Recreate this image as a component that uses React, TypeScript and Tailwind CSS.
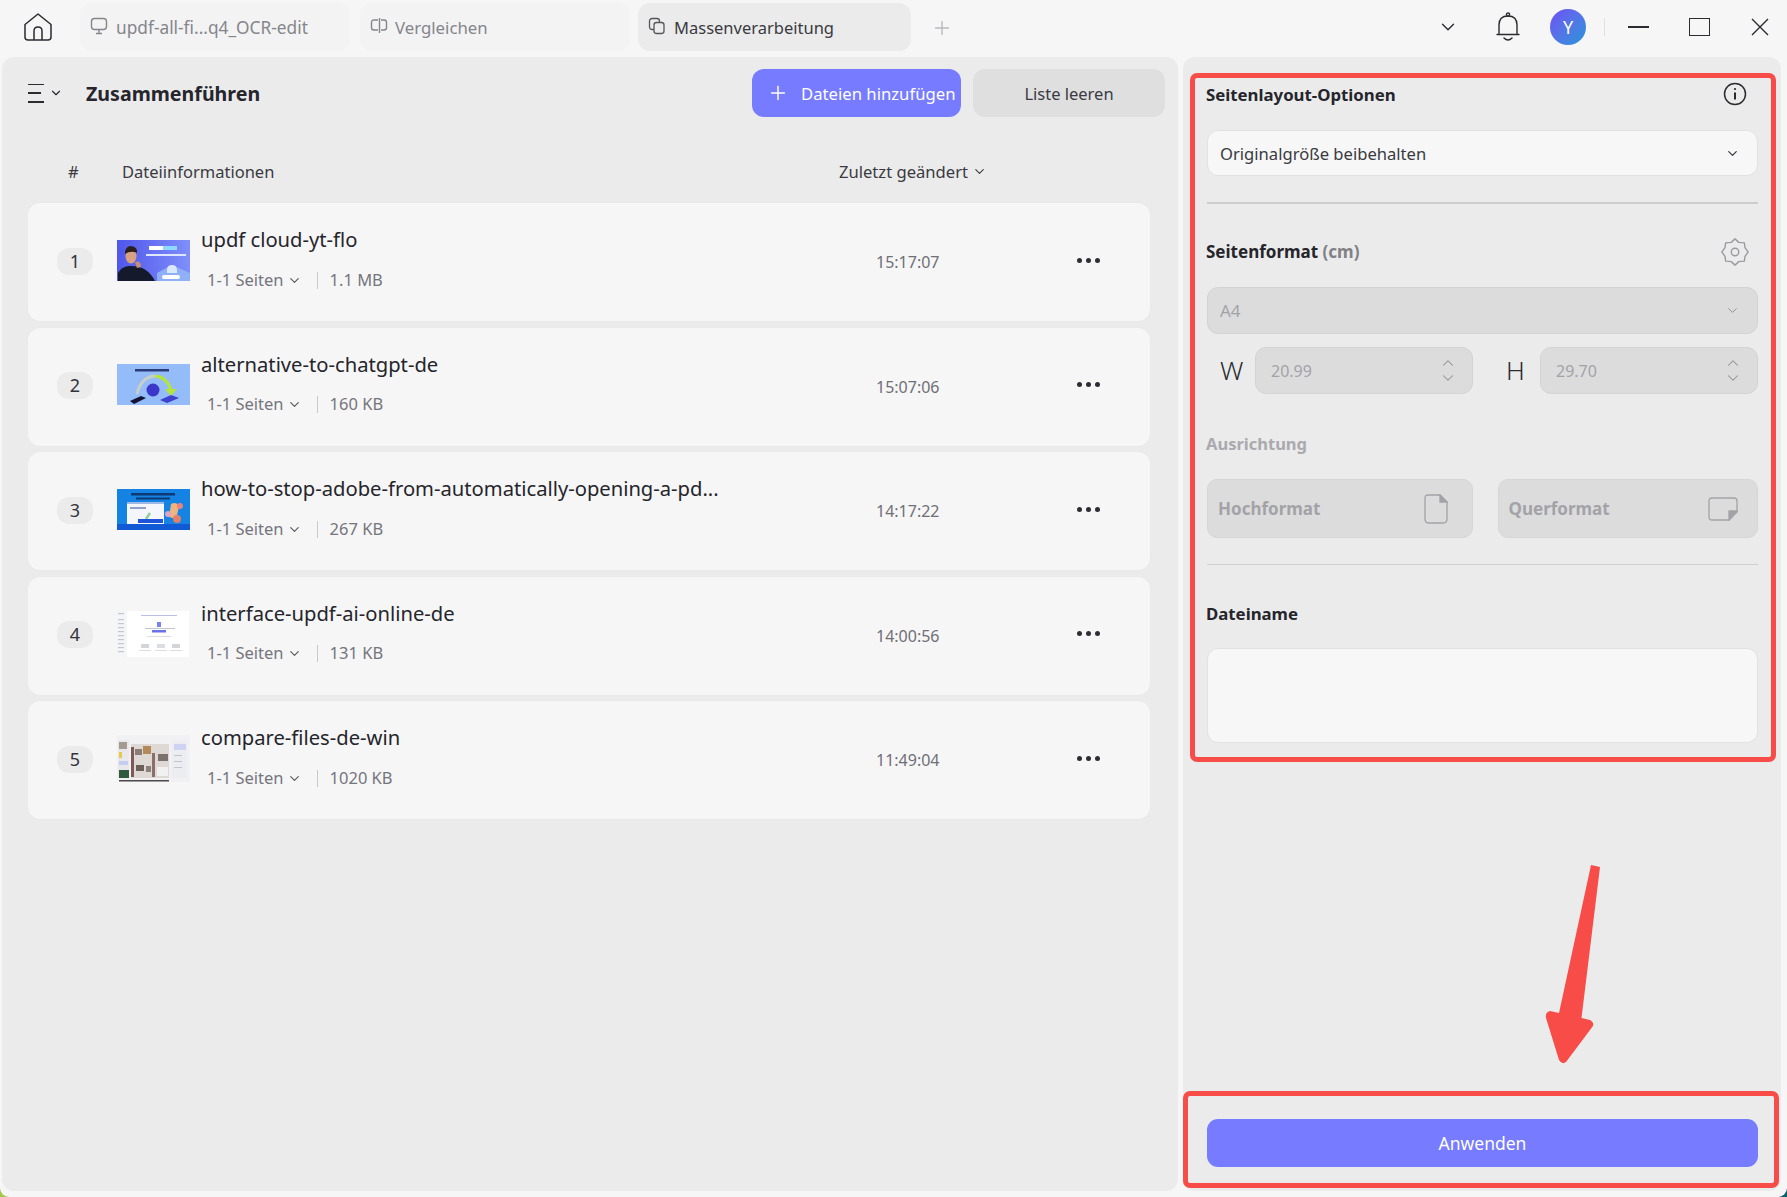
import type { ReactNode } from "react";
import { ChevronDown, ChevronUp, Plus } from "lucide-react";

type FileRow = {
  id: number;
  title: string;
  size: string;
  time: string;
  thumb: "cloud" | "chatgpt" | "adobe" | "online" | "compare";
};

const files: FileRow[] = [
  { id: 1, title: "updf cloud-yt-flo", size: "1.1 MB", time: "15:17:07", thumb: "cloud" },
  { id: 2, title: "alternative-to-chatgpt-de", size: "160 KB", time: "15:07:06", thumb: "chatgpt" },
  { id: 3, title: "how-to-stop-adobe-from-automatically-opening-a-pd...", size: "267 KB", time: "14:17:22", thumb: "adobe" },
  { id: 4, title: "interface-updf-ai-online-de", size: "131 KB", time: "14:00:56", thumb: "online" },
  { id: 5, title: "compare-files-de-win", size: "1020 KB", time: "11:49:04", thumb: "compare" },
];

function Thumb({ kind }: { kind: FileRow["thumb"] }) {
  if (kind === "cloud") {
    return (
      <svg viewBox="0 0 73 41" className="h-[41px] w-[73px] shrink-0">
        <defs>
          <linearGradient id="cloudBg" x1="0" x2="1" y1="0" y2="0">
            <stop offset="0" stopColor="#4f56ea" />
            <stop offset="1" stopColor="#7f8ffa" />
          </linearGradient>
        </defs>
        <rect width="73" height="41" fill="url(#cloudBg)" />
        <path d="M40 33 L55 25 L73 33 V41 H40 Z" fill="#8fb0f8" />
        <path d="M50 30 Q50 25 55 25 Q60 25 60 30 V33 H50 Z" fill="#dbe8ff" />
        <rect x="45" y="35" width="18" height="4" rx="2" fill="#ffffff" />
        <rect x="32" y="6" width="14" height="4" fill="#ffffff" />
        <rect x="46" y="6" width="14" height="4" fill="#8fd8ff" />
        <rect x="29" y="14" width="40" height="2" fill="#dfe6ff" />
        <path d="M1 41 V33 Q4 27 12 26 Q30 25 38 41 Z" fill="#141a2c" />
        <ellipse cx="14" cy="16" rx="5.5" ry="7.5" fill="#d9a184" />
        <path d="M8 14 Q8 6 14 6 Q21 7 20 13 Q14 10 8 14 Z" fill="#2a211c" />
        <path d="M18 22 Q24 20 24 27 L20 28 Z" fill="#c98f74" />
      </svg>
    );
  }
  if (kind === "chatgpt") {
    return (
      <svg viewBox="0 0 73 41" className="h-[41px] w-[73px] shrink-0">
        <rect width="73" height="41" fill="#94bcf9" />
        <rect x="18" y="5" width="34" height="2.5" fill="#2a3b78" />
        <path d="M20 30 Q24 13 38 12" fill="none" stroke="#c6cfc8" strokeWidth="3" />
        <path d="M38 12 Q50 13 54 26" fill="none" stroke="#b5e43c" strokeWidth="3" />
        <path d="M48 25 L60 25 L54 32 Z" fill="#b5e43c" />
        <circle cx="36" cy="26" r="6.5" fill="#3b37c9" />
        <path d="M13 37 L24 32 L29 34 L17 40 Z" fill="#141433" />
        <path d="M43 36 L54 31 L62 34 L50 39 Z" fill="#3f3fd0" />
      </svg>
    );
  }
  if (kind === "adobe") {
    return (
      <svg viewBox="0 0 73 41" className="h-[41px] w-[73px] shrink-0">
        <rect width="73" height="41" fill="#1583e3" />
        <rect y="35" width="73" height="6" fill="#1259d6" />
        <rect x="14" y="4" width="44" height="2.5" fill="#0c3a74" />
        <rect x="19" y="8.5" width="34" height="2" fill="#0c3a74" />
        <rect x="10" y="13" width="37" height="22" fill="#f4f6fb" />
        <rect x="10" y="13" width="37" height="2" fill="#9bb8e6" />
        <rect x="13" y="18" width="16" height="2" fill="#8ea2c8" />
        <path d="M29 30 L33 24" stroke="#93cd9e" strokeWidth="2.5" />
        <rect x="21" y="30" width="25" height="4" fill="#1e55d8" />
        <path d="M54 15 Q60 12 62 18 L59 30 L52 28 Z" fill="#f0b27e" />
        <circle cx="60" cy="30" r="4" fill="#e07f6a" />
        <circle cx="51" cy="25" r="3" fill="#d9a6c5" />
        <circle cx="63" cy="17" r="3" fill="#e8847a" />
      </svg>
    );
  }
  if (kind === "online") {
    return (
      <svg viewBox="0 0 73 46" className="h-[46px] w-[73px] shrink-0">
        <rect x="10" width="62" height="46" fill="#ffffff" />
        <rect width="9" height="46" fill="#f4f5f8" />
        {[2, 8, 12, 16, 20, 24, 28, 32, 36, 40].map((y) => (
          <rect key={y} x="1" y={y} width="6" height="1.2" fill="#c5c7d0" />
        ))}
        <rect x="24" y="4" width="36" height="1" fill="#b9c1ea" />
        <rect x="40" y="11" width="4" height="5" fill="#7a83e8" />
        <rect x="28" y="17" width="30" height="1" fill="#c4c6ce" />
        <rect x="35" y="19" width="14" height="2.5" fill="#6a72ea" />
        <rect x="30" y="25" width="24" height="1" fill="#dcdde2" />
        <rect x="24" y="33" width="8" height="4" fill="#d4d5da" />
        <rect x="40" y="33" width="8" height="4" fill="#dddee3" />
        <rect x="55" y="33" width="8" height="4" fill="#d4d5da" />
        <rect x="22" y="39" width="12" height="1" fill="#dcdde2" />
        <rect x="38" y="39" width="12" height="1" fill="#dcdde2" />
        <rect x="53" y="39" width="12" height="1" fill="#dcdde2" />
      </svg>
    );
  }
  return (
    <svg viewBox="0 0 73 47" className="h-[47px] w-[73px] shrink-0">
      <rect width="73" height="47" fill="#f1f1f4" />
      <rect x="1" y="5" width="11" height="38" fill="#e8e8ea" />
      <rect x="2" y="7" width="8" height="7" fill="#a59a92" />
      <rect x="2" y="17" width="3" height="6" fill="#e8c84a" />
      <rect x="2" y="26" width="9" height="4" fill="#c7cdf0" />
      <rect x="2" y="35" width="10" height="8" fill="#2f5a3e" />
      <rect x="2" y="45" width="50" height="1.5" fill="#4a4a4a" />
      <rect x="14" y="9" width="38" height="34" fill="#dfd9d5" />
      <rect x="14" y="12" width="3" height="30" fill="#7d5a58" />
      <rect x="18" y="14" width="7" height="6" fill="#8a7d76" />
      <rect x="26" y="11" width="8" height="8" fill="#b48a5a" />
      <rect x="35" y="18" width="3" height="24" fill="#8c6e6a" />
      <rect x="41" y="19" width="10" height="7" fill="#7d726b" />
      <rect x="19" y="30" width="8" height="6" fill="#6b5f59" />
      <rect x="29" y="31" width="5" height="6" fill="#8d8079" />
      <rect x="40" y="32" width="11" height="9" fill="#f2f1f1" />
      <rect x="55" y="6" width="15" height="37" fill="#ecedf1" />
      <rect x="57" y="9" width="12" height="6" fill="#cfd3f3" />
      <rect x="57" y="20" width="8" height="1" fill="#c3c3c9" />
      <rect x="57" y="26" width="8" height="1" fill="#c3c3c9" />
      <rect x="57" y="32" width="8" height="1" fill="#c3c3c9" />
    </svg>
  );
}

function FileCard({ file }: { file: FileRow }) {
  return (
    <div className="flex h-[118px] items-center rounded-xl bg-[#f6f6f7] pl-[29px] shadow-[0_0_2px_rgba(0,0,0,0.04)]">
      <div className="mb-[2px] flex h-[27px] w-[36px] shrink-0 items-center justify-center rounded-xl bg-[#ebebec] text-[18px] text-[#33333a]">
        {file.id}
      </div>
      <div className="mb-[4px] ml-[24px] flex w-[73px] justify-center">
        <Thumb kind={file.thumb} />
      </div>
      <div className="mb-[9px] ml-[11px] flex w-[640px] flex-col">
        <div className="h-[30px] text-[20.2px] leading-[30px] whitespace-nowrap text-[#25252b]">{file.title}</div>
        <div className="mt-[15px] flex h-[22px] items-center pl-[6px] text-[16.5px] text-[#75757c]">
          <span>1-1 Seiten</span>
          <ChevronDown className="ml-[3px] h-[15px] w-[15px] text-[#55555b]" strokeWidth={1.8} />
          <span className="mr-[12px] ml-[15px] h-[17px] w-[1px] bg-[#c9c9cc]" />
          <span>{file.size}</span>
        </div>
      </div>
      <div className="ml-[35px] w-[62px] text-[16px] text-[#6f6f76]">{file.time}</div>
      <div className="mb-[4px] ml-[139px] flex gap-[4px]">
        <span className="h-[5px] w-[5px] rounded-full bg-[#2d2d33]" />
        <span className="h-[5px] w-[5px] rounded-full bg-[#2d2d33]" />
        <span className="h-[5px] w-[5px] rounded-full bg-[#2d2d33]" />
      </div>
    </div>
  );
}

function Tab({ label, className, icon, textClass }: { label: string; className: string; icon: ReactNode; textClass: string }) {
  return (
    <div className={"flex h-[48px] items-center rounded-xl pl-[10px] " + className}>
      <span className="mb-[3px]">{icon}</span>
      <span className={textClass}>{label}</span>
    </div>
  );
}

function Stepper({ value }: { value: string }) {
  return (
    <div className="flex h-full w-[218px] items-center justify-between rounded-[11px] border border-[#d3d3d4] bg-[#dcdcdd] pr-[15px] pl-[15px] text-[16px] text-[#a3a3a7]">
      {value}
      <span className="flex flex-col text-[#8f8f94]">
        <ChevronUp className="mb-[-3px] h-[18px] w-[18px]" strokeWidth={1.4} />
        <ChevronDown className="h-[18px] w-[18px]" strokeWidth={1.4} />
      </span>
    </div>
  );
}

export default function App() {
  return (
    <div className="h-[1197px] w-[1787px] overflow-hidden bg-gradient-to-r from-[#a4c64a] to-[#0d5f6b]">
      <div
        className="relative flex h-[1197px] w-[1787px] flex-col overflow-hidden rounded-b-[9px] bg-[#f6f6f7]"
        style={{ fontFamily: '"Noto Sans", "Open Sans", sans-serif' }}
      >
        {/* title bar */}
        <div className="flex h-[57px] shrink-0 items-center pb-[3px]">
          <svg viewBox="0 0 28 28" className="ml-[24px] h-[28px] w-[28px]" fill="none" stroke="#2b2b30" strokeWidth="1.5" strokeLinejoin="round">
            <path d="M1 11.5 L14 1 L27 11.5 V24 Q27 27 24 27 H4 Q1 27 1 24 Z" />
            <path d="M10 27 V18 Q10 14 14 14 Q18 14 18 18 V27" />
          </svg>
          <div className="ml-[28px] flex items-center">
            <Tab
              label="updf-all-fi...q4_OCR-edit"
              className="w-[270px] bg-[#f3f3f4] text-[#85858b]"
              textClass="mt-[2px] ml-[8px] text-[17.3px]"
              icon={
                <svg viewBox="0 0 18 18" className="block h-[18px] w-[18px]" fill="none" stroke="#85858b" strokeWidth="1.4">
                  <rect x="1.5" y="1.5" width="15" height="11" rx="3" />
                  <path d="M9 12.5 V16 M6 16.5 H12" />
                </svg>
              }
            />
            <div className="ml-[10px]">
              <Tab
                label="Vergleichen"
                className="w-[270px] bg-[#f3f3f4] text-[#85858b]"
                textClass="mt-[2px] ml-[7px] text-[16.8px]"
                icon={
                  <svg viewBox="0 0 18 18" className="block h-[18px] w-[18px]" fill="none" stroke="#85858b" strokeWidth="1.4">
                    <path d="M8 3 H4 Q1.5 3 1.5 5.5 V10.5 Q1.5 13 4 13 H8 M11 3 H14 Q16.5 3 16.5 5.5 V10.5 Q16.5 13 14 13 H11" />
                    <path d="M9.5 1 V16" />
                  </svg>
                }
              />
            </div>
            <div className="ml-[8px]">
              <Tab
                label="Massenverarbeitung"
                className="w-[273px] bg-[#ebebec] text-[#3a3a40]"
                textClass="mt-[2px] ml-[8px] text-[16.5px]"
                icon={
                  <svg viewBox="0 0 18 18" className="block h-[18px] w-[18px]" fill="none" stroke="#55555b" strokeWidth="1.3">
                    <rect x="1.5" y="1.5" width="10" height="11" rx="2.5" />
                    <rect x="6" y="5.5" width="10" height="11" rx="2.5" fill="#ebebec" />
                  </svg>
                }
              />
            </div>
          </div>
          <Plus className="mt-[1px] ml-[20px] h-[22px] w-[22px] text-[#b9b9bd]" strokeWidth={1.5} />
          <ChevronDown className="ml-[484px] h-[22px] w-[22px] text-[#2b2b30]" strokeWidth={1.5} />
          <svg viewBox="0 0 24 30" className="ml-[37px] h-[30px] w-[24px]" fill="none" stroke="#2b2b30" strokeWidth="1.4" strokeLinecap="round">
            <circle cx="12" cy="2.6" r="1.6" />
            <path d="M3 22 V13 Q3 4 12 4 Q21 4 21 13 V22" />
            <path d="M1 22.5 H23" />
            <path d="M8 26 Q12 30 16 26" />
          </svg>
          <div className="ml-[30px] flex h-[36px] w-[36px] items-center justify-center rounded-full bg-gradient-to-br from-[#6d4cf5] to-[#0c95d8] text-[18px] text-white">
            Y
          </div>
          <span className="ml-[18px] h-[18px] w-[1px] bg-[#e0e0e2]" />
          <span className="ml-[23px] h-[1.5px] w-[21px] bg-[#2b2b30]" />
          <span className="ml-[40px] h-[18px] w-[21px] border-[1.5px] border-[#2b2b30]" />
          <svg viewBox="0 0 20 20" className="ml-[40px] h-[20px] w-[20px]" fill="none" stroke="#2b2b30" strokeWidth="1.4">
            <path d="M2 2 L18 18 M18 2 L2 18" />
          </svg>
        </div>

        <div className="flex min-h-0 flex-1 gap-[5px] pr-[6px] pl-[2px]">
          {/* file list */}
          <div className="flex h-[1134px] w-[1176px] flex-col rounded-xl bg-[#ebebec] pl-[26px]">
            <div className="flex h-[60px] shrink-0 items-end pr-[13px]">
              <div className="flex h-[48px] w-full items-center">
                <div className="flex w-[58px] items-center">
                  <span className="flex h-[19px] w-[16px] flex-col justify-between">
                    <span className="h-[1.5px] bg-[#2b2b30]" />
                    <span className="h-[1.5px] w-[13px] bg-[#2b2b30]" />
                    <span className="h-[1.5px] bg-[#2b2b30]" />
                  </span>
                  <ChevronDown className="ml-[5px] h-[14px] w-[14px] text-[#2b2b30]" strokeWidth={2} />
                </div>
                <span className="mt-[1px] text-[19.6px] font-bold text-[#25252b]">Zusammenführen</span>
                <div className="ml-auto flex h-[48px] w-[209px] items-center rounded-xl bg-[#767bff] pl-[15px] text-[16.7px] whitespace-nowrap text-white">
                  <Plus className="h-[22px] w-[22px]" strokeWidth={1.6} />
                  <span className="mt-[2px] ml-[12px]">Dateien hinzufügen</span>
                </div>
                <div className="ml-[12px] flex h-[48px] w-[192px] items-center justify-center rounded-xl bg-[#dfdfe0] pt-[2px] text-[16.5px] text-[#3a3a40]">
                  Liste leeren
                </div>
              </div>
            </div>
            <div className="flex h-[86px] shrink-0 items-center pt-[24px] pr-[48px] text-[16.6px] text-[#3a3a40]">
              <span className="ml-[40px] w-[54px]">#</span>
              <span className="text-[16.5px]">Dateiinformationen</span>
              <span className="ml-auto flex items-center gap-[4px] pr-[143px]">
                Zuletzt geändert
                <ChevronDown className="h-[15px] w-[15px]" strokeWidth={1.8} />
              </span>
            </div>
            <div className="flex w-[1122px] flex-col gap-[6.5px]">
              {files.map((f) => (
                <FileCard key={f.id} file={f} />
              ))}
            </div>
          </div>

          {/* options */}
          <div className="flex h-[1134px] w-[598px] flex-col rounded-xl bg-[#ebebec] pr-[23px] pl-[24px]">
            <div className="flex h-[76px] shrink-0 items-end justify-between pb-[26px]">
              <span className="ml-[-1px] text-[16.8px] font-bold text-[#25252b]">Seitenlayout-Optionen</span>
              <svg viewBox="0 0 24 24" className="mr-[11px] mb-[1px] h-[24px] w-[24px]" fill="none" stroke="#2b2b30" strokeWidth="1.5">
                <circle cx="12" cy="12" r="10.5" />
                <path d="M12 10.5 V17.5" strokeWidth="2" />
                <circle cx="12" cy="7" r="1.1" fill="#2b2b30" stroke="none" />
              </svg>
            </div>
            <div className="mt-[-3px] flex h-[46px] shrink-0 items-center justify-between rounded-[11px] border border-[#e2e2e3] bg-[#f7f7f8] pr-[17px] pl-[12px] text-[16.6px] text-[#3a3a40]">
              <span className="mt-[2px]">Originalgröße beibehalten</span>
              <ChevronDown className="h-[15px] w-[15px]" strokeWidth={2} />
            </div>
            <div className="mt-[26px] h-[2px] shrink-0 bg-[#cdcdce]" />
            <div className="mt-[34px] flex h-[28px] shrink-0 items-center justify-between">
              <span className="ml-[-1px] text-[17px] font-bold text-[#25252b]">
                Seitenformat <span className="text-[#808086]">(cm)</span>
              </span>
              <svg viewBox="0 0 24 24" className="mr-[8px] h-[30px] w-[30px]" fill="none" stroke="#9a9a9f" strokeWidth="1.1" strokeLinejoin="round">
                <path d="M12 1.5 L15 4.3 L19.5 4.7 L20 8.5 L22.5 12 L20 15.5 L19.5 19.3 L15 19.7 L12 22.5 L9 19.7 L4.5 19.3 L4 15.5 L1.5 12 L4 8.5 L4.5 4.7 L9 4.3 Z" />
                <circle cx="12" cy="12" r="3" />
              </svg>
            </div>
            <div className="mt-[21px] flex h-[47px] shrink-0 items-center justify-between rounded-[11px] border border-[#d3d3d4] bg-[#dcdcdd] pr-[17px] pl-[12px] text-[17px] text-[#a3a3a7]">
              A4
              <ChevronDown className="h-[15px] w-[15px] text-[#8f8f94]" strokeWidth={1.6} />
            </div>
            <div className="mt-[13px] flex h-[47px] shrink-0 items-center">
              <span className="w-[48px] pl-[13px] text-[26px] font-light text-[#2b2b30]">W</span>
              <Stepper value="20.99" />
              <span className="w-[67px] pl-[33px] text-[26px] font-light text-[#2b2b30]">H</span>
              <Stepper value="29.70" />
            </div>
            <div className="mt-[37px] ml-[-1px] h-[26px] shrink-0 text-[16.5px] leading-[26px] font-bold text-[#aaaaae]">Ausrichtung</div>
            <div className="mt-[22px] flex h-[59px] shrink-0 gap-[25px]">
              <div className="flex flex-1 items-center justify-between rounded-[10px] border border-[#d6d6d7] bg-[#dcdcdd] pr-[24px] pl-[10px] text-[17px] font-bold text-[#a3a3a7]">
                Hochformat
                <svg viewBox="0 0 24 30" className="h-[30px] w-[24px]" fill="none" stroke="#a3a3a7" strokeWidth="1.3">
                  <path d="M4 1 H16 L23 8 V25 Q23 29 19 29 H5 Q1 29 1 25 V4 Q1 1 4 1 Z" />
                  <path d="M16 1 L23 8 H16 Z" fill="#a3a3a7" />
                </svg>
              </div>
              <div className="flex flex-1 items-center justify-between rounded-[10px] border border-[#d6d6d7] bg-[#dcdcdd] pr-[19px] pl-[10px] text-[17px] font-bold text-[#a3a3a7]">
                Querformat
                <svg viewBox="0 0 30 24" className="h-[24px] w-[30px]" fill="none" stroke="#a3a3a7" strokeWidth="1.3">
                  <path d="M4 1 H26 Q29 1 29 4 V15 L21 23 H4 Q1 23 1 20 V4 Q1 1 4 1 Z" />
                  <path d="M29 14 L21 23 V14 Z" fill="#a3a3a7" />
                </svg>
              </div>
            </div>
            <div className="mt-[26px] h-[1px] shrink-0 bg-[#cfcfd0]" />
            <div className="mt-[36px] ml-[-1px] h-[26px] shrink-0 text-[16.8px] leading-[26px] font-bold text-[#25252b]">Dateiname</div>
            <div className="mt-[21px] h-[95px] shrink-0 rounded-[11px] border border-[#e2e2e3] bg-[#f7f7f8]" />
            <div className="mt-auto mb-[24px] flex h-[48px] shrink-0 items-center justify-center rounded-[11px] bg-[#767bff] text-[17.5px] text-white">
              Anwenden
            </div>
          </div>
        </div>

        {/* annotations */}
        <div className="pointer-events-none absolute top-[73px] left-[1190px] h-[689px] w-[586px] rounded-[7px] border-[5.5px] border-[#f74c47]" />
        <div className="pointer-events-none absolute top-[1091px] left-[1183px] h-[97px] w-[596px] rounded-[7px] border-[5.5px] border-[#f74c47]" />
        <svg viewBox="0 0 1787 1197" className="pointer-events-none absolute inset-0 h-[1197px] w-[1787px]">
          <path
            d="M1591 865 L1600 867 L1581.5 1018 L1590 1020 Q1594 1022 1593 1026 L1566 1062 Q1562 1065 1559 1060 L1546 1018 Q1545 1012 1550 1011 L1559 1013 Z"
            fill="#f74c47"
          />
        </svg>
      </div>
    </div>
  );
}
